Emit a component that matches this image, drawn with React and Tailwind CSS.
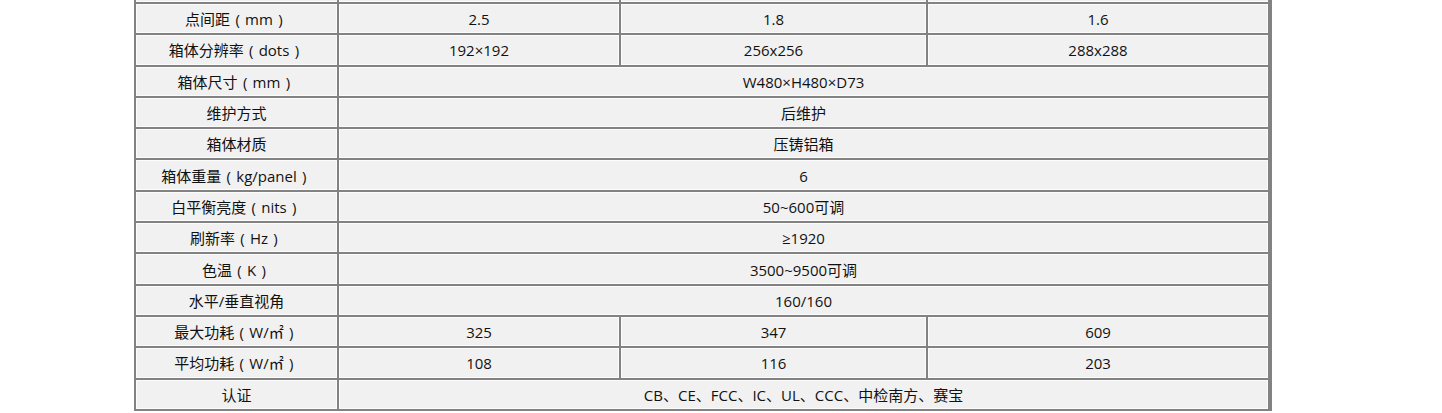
const rows = [
  ["点间距（mm）", "2.5", "1.8", "1.6"],
  ["箱体分辨率（dots）", "192×192", "256x256", "288x288"],
  ["箱体尺寸（mm）", "W480×H480×D73"],
  ["维护方式", "后维护"],
  ["箱体材质", "压铸铝箱"],
  ["箱体重量（kg/panel）", "6"],
  ["白平衡亮度（nits）", "50~600可调"],
  ["刷新率（Hz）", "≥1920"],
  ["色温（K）", "3500~9500可调"],
  ["水平/垂直视角", "160/160"],
  ["最大功耗（W/㎡）", "325", "347", "609"],
  ["平均功耗（W/㎡）", "108", "116", "203"],
  ["认证", "CB、CE、FCC、IC、UL、CCC、中检南方、赛宝"],
];

function Label({ text }) {
  const m = text.match(/^(.*)（(.*)）$/);
  if (!m) return <span>{text}</span>;
  return (
    <span className="flex items-center">
      <span>{m[1]}</span>
      <span className="inline-block w-[15px] text-center">(</span>
      <span>{m[2]}</span>
      <span className="inline-block w-[15px] text-center">)</span>
    </span>
  );
}

function Cell({ children, className = "" }) {
  return (
    <div
      className={
        "flex items-center justify-center h-full pt-[2px] bg-[#f1f1f1] shadow-[inset_0_0_0_1px_#fcfcfc] border-r-2 border-[#828282] " +
        className
      }
    >
      {children}
    </div>
  );
}

function Row({ r, top }) {
  return (
    <div
      className={
        "flex h-[31.3px] border-b-2 border-[#828282] box-border " +
        (top ? "mt-[-27.3px]" : "")
      }
    >
      <Cell className="w-[203px]">
        <Label text={r[0]} />
      </Cell>
      {r.length === 4 ? (
        <>
          <Cell className="w-[282px]">{r[1]}</Cell>
          <Cell className="w-[307px]">{r[2]}</Cell>
          <Cell className="flex-1 border-r-0">{r[3]}</Cell>
        </>
      ) : (
        <Cell className="flex-1 border-r-0">{r[1]}</Cell>
      )}
    </div>
  );
}

export default function App() {
  return (
    <div className="w-[1442px] h-[413px] bg-white overflow-hidden">
      <div
        className="ml-[134px] w-[1138px] border-l-2 border-r-2 border-[#828282] text-[15px] text-[#111] leading-none"
        style={{
          fontFamily:
            '"Open Sans", "DejaVu Sans", "Noto Sans CJK SC", sans-serif',
        }}
      >
        <Row r={["", "", "", ""]} top />
        {rows.map((r, i) => (
          <Row key={i} r={r} />
        ))}
      </div>
    </div>
  );
}
